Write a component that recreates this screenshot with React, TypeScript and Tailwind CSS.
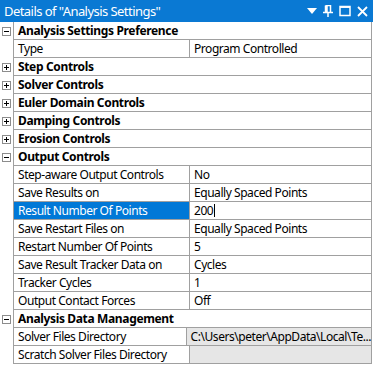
import React from "react";

type Row =
  | { kind: "cat"; label: string; open: boolean }
  | { kind: "prop"; label: string; value: string; selected?: boolean; editing?: boolean; readOnly?: boolean };

const rows: Row[] = [
  { kind: "cat", label: "Analysis Settings Preference", open: true },
  { kind: "prop", label: "Type", value: "Program Controlled" },
  { kind: "cat", label: "Step Controls", open: false },
  { kind: "cat", label: "Solver Controls", open: false },
  { kind: "cat", label: "Euler Domain Controls", open: false },
  { kind: "cat", label: "Damping Controls", open: false },
  { kind: "cat", label: "Erosion Controls", open: false },
  { kind: "cat", label: "Output Controls", open: true },
  { kind: "prop", label: "Step-aware Output Controls", value: "No" },
  { kind: "prop", label: "Save Results on", value: "Equally Spaced Points" },
  { kind: "prop", label: "Result Number Of Points", value: "200", selected: true, editing: true },
  { kind: "prop", label: "Save Restart Files on", value: "Equally Spaced Points" },
  { kind: "prop", label: "Restart Number Of Points", value: "5" },
  { kind: "prop", label: "Save Result Tracker Data on", value: "Cycles" },
  { kind: "prop", label: "Tracker Cycles", value: "1" },
  { kind: "prop", label: "Output Contact Forces", value: "Off" },
  { kind: "cat", label: "Analysis Data Management", open: true },
  { kind: "prop", label: "Solver Files Directory", value: "C:\\Users\\peter\\AppData\\Local\\Te...", readOnly: true },
  { kind: "prop", label: "Scratch Solver Files Directory", value: "", readOnly: true },
];

function Expander({ open }: { open: boolean }) {
  return (
    <svg width="9" height="9" viewBox="0 0 9 9" className="block">
      <rect x="0.5" y="0.5" width="8" height="8" fill="#fff" stroke="#8c8c8c" />
      <line x1="2" y1="4.5" x2="7" y2="4.5" stroke="#000" />
      {!open && <line x1="4.5" y1="2" x2="4.5" y2="7" stroke="#000" />}
    </svg>
  );
}

function TitleBar() {
  return (
    <div className="flex h-[22px] items-center bg-[#0a79d3] pl-[4px] pr-[5px] text-white">
      <span className="whitespace-nowrap text-[13px] leading-none tracking-[-0.55px]">Details of "Analysis Settings"</span>
      <div className="ml-[6px] h-[5px] flex-1 bg-[radial-gradient(circle,rgba(255,255,255,0.4)_0.5px,transparent_0.7px)] bg-[length:2px_2px]" />
      <div className="ml-[6px] flex items-center gap-[6px]">
        <svg width="10" height="6" viewBox="0 0 10 6">
          <path d="M0 0H10L5 6Z" fill="#fff" />
        </svg>
        <svg width="10" height="12" viewBox="0 0 10 12">
          <path d="M2.5 0.5H7.5V7.5M2.5 0.5V7.5M4 0.5V7.5M0 7.5H10M5 7.5V12" stroke="#fff" strokeWidth="1.5" fill="none" />
        </svg>
        <svg width="12" height="12" viewBox="0 0 12 12">
          <rect x="1" y="1.5" width="10" height="9" stroke="#fff" strokeWidth="1.5" fill="none" />
          <line x1="1" y1="2.2" x2="11" y2="2.2" stroke="#fff" strokeWidth="1.5" />
        </svg>
        <svg width="11" height="11" viewBox="0 0 11 11">
          <path d="M1 1L10 10M10 1L1 10" stroke="#fff" strokeWidth="1.8" />
        </svg>
      </div>
    </div>
  );
}

export default function App() {
  return (
    <div className="h-[369px] w-[373px] overflow-hidden bg-white font-['Segoe_UI','Noto_Sans',sans-serif] text-[12px] text-black">
      <TitleBar />
      <div className="flex flex-col tracking-[-0.45px]">
        {rows.map((r, i) => (
          <div key={i} className="flex h-[18px]">
            <div className="flex w-[13px] items-center justify-center pl-[1px] pr-[2px]">
              {r.kind === "cat" && <Expander open={r.open} />}
            </div>
            <div className="flex w-[359px] border-b border-l border-r border-[#a0a0a0]">
              {r.kind === "cat" ? (
                <div className="flex flex-1 items-center pl-[4px] font-bold leading-none tracking-[-0.35px]">{r.label}</div>
              ) : (
                <>
                  <div
                    className={
                      "flex w-[176px] items-center border-r border-[#a0a0a0] pl-[4px] leading-none " +
                      (r.selected ? "bg-[#0078d7] text-white" : "")
                    }
                  >
                    {r.label}
                  </div>
                  <div
                    className={
                      "flex flex-1 items-center whitespace-nowrap pl-[4px] leading-none " +
                      (r.readOnly ? "bg-[#e6e6e6]" : "")
                    }
                  >
                    {r.value}
                    {r.editing && <span className="ml-[1px] inline-block h-[13px] w-px bg-black" />}
                  </div>
                </>
              )}
            </div>
          </div>
        ))}
      </div>
    </div>
  );
}
